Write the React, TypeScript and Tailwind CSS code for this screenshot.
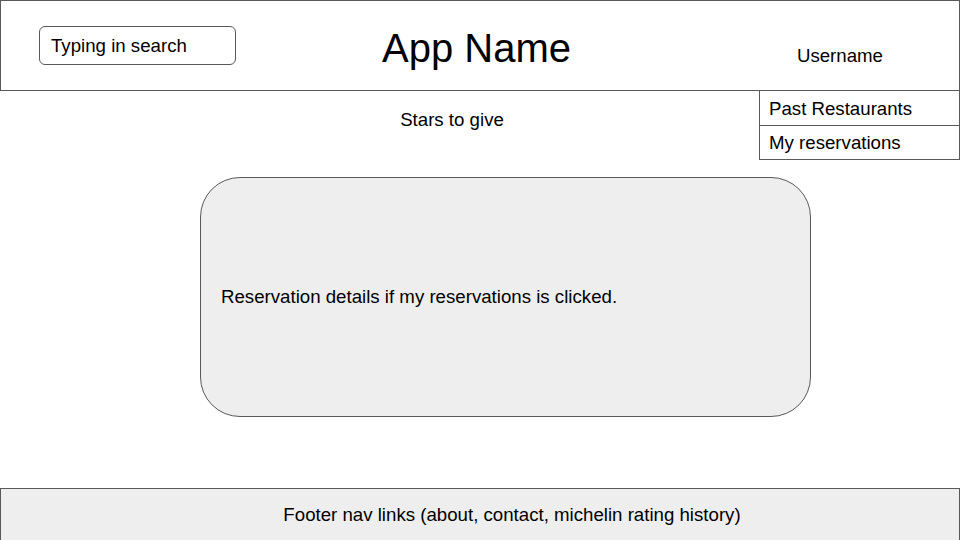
export default function App() {
  return (
    <div className="relative w-[960px] h-[540px] flex flex-col bg-white text-black font-['Liberation_Sans',Arial,sans-serif] overflow-hidden">
      {/* Header */}
      <header className="h-[91px] shrink-0 border border-[#595959] flex items-center pl-[38px]">
        <div className="w-[197px] h-[39px] border border-[#595959] rounded-[6px] flex items-center pl-[11px] text-[18.67px] leading-[22px]">
          Typing in search
        </div>
        <h1 className="ml-[146px] mt-[4px] text-[40px] leading-[46px]">App Name</h1>
        <div className="ml-auto mr-[76px] self-start mt-[44px] text-[18.67px] leading-[22px]">Username</div>
      </header>

      {/* Account menu */}
      <div className="absolute left-[759px] top-[90px] w-[201px] bg-white border border-[#595959] text-[18.67px] leading-[22px]">
        <div className="h-[35px] flex items-center pl-[9px] pt-[1px] border-b border-[#595959]">Past Restaurants</div>
        <div className="h-[33px] flex items-center pl-[9px]">My reservations</div>
      </div>

      <main className="flex-1 flex flex-col">
        <div className="mt-[18px] flex justify-center pr-[56px] text-[18.67px] leading-[22px]">Stars to give</div>
        <div className="ml-[200px] mt-[46px] w-[611px] h-[240px] rounded-[40px] border border-[#595959] bg-[#eeeeee] flex items-center pl-[20px] text-[18.67px] leading-[22px]">
          Reservation details if my reservations is clicked.
        </div>
      </main>

      <footer className="h-[52px] shrink-0 bg-[#eeeeee] border-t border-l border-r border-[#595959] flex items-center justify-center pl-[64px] text-[18.67px] leading-[22px]">
        Footer nav links (about, contact, michelin rating history)
      </footer>
    </div>
  )
}
